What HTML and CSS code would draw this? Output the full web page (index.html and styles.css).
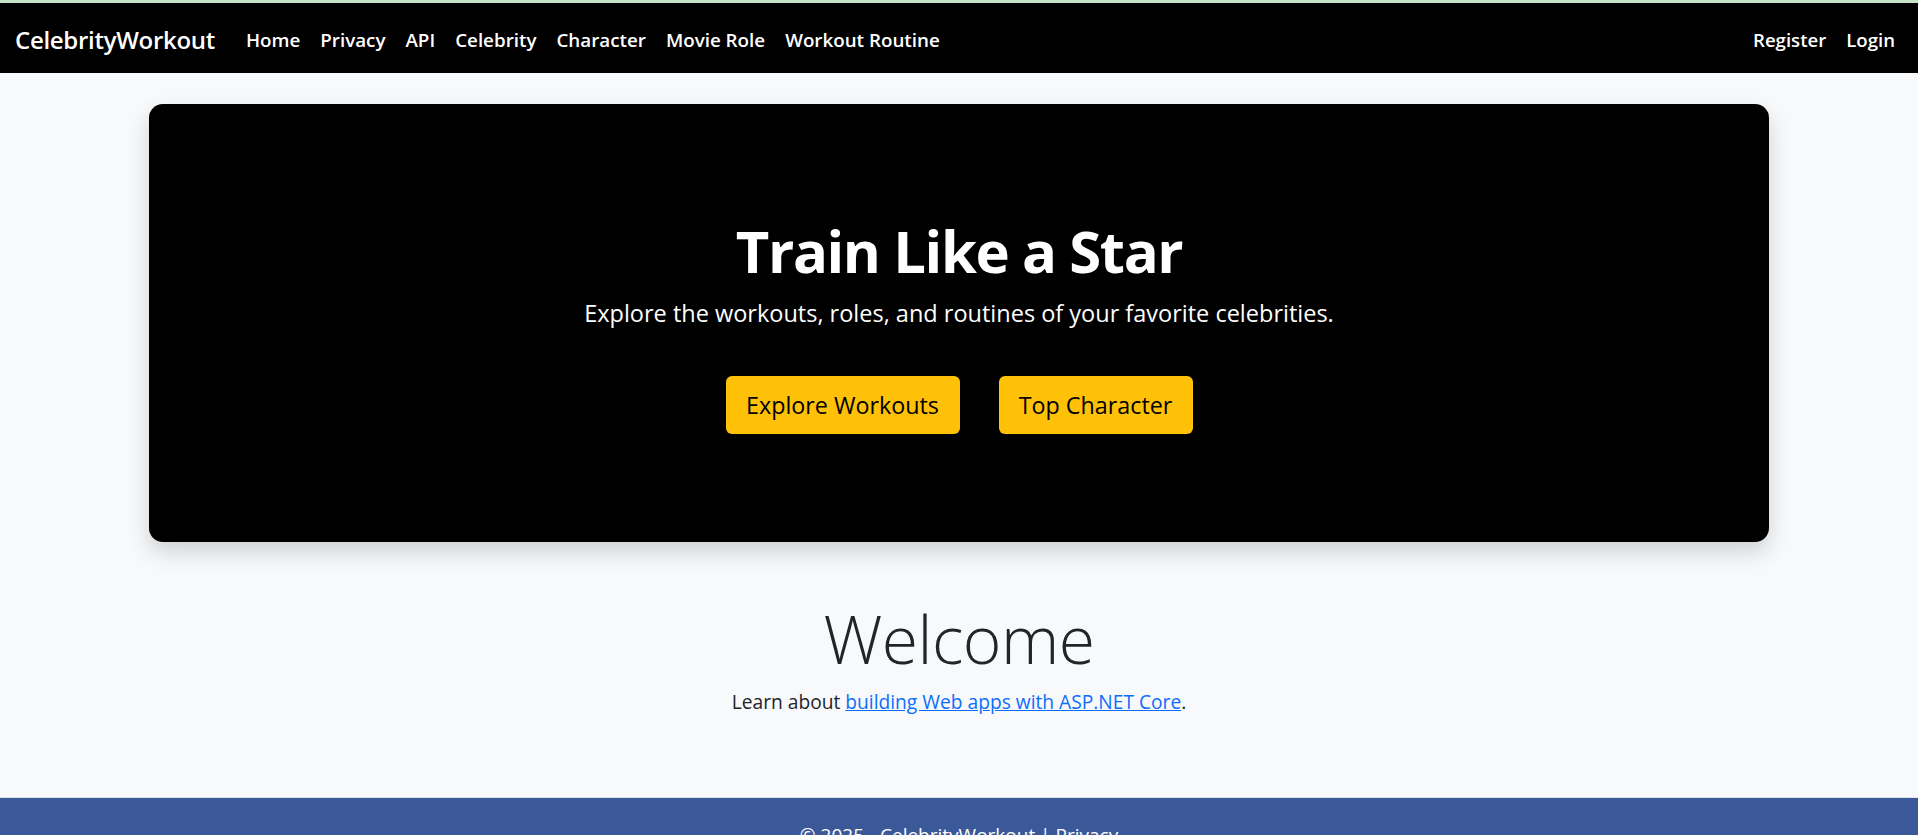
FILE: index.html
```html
<!DOCTYPE html>
<html lang="en">
<head>
<meta charset="utf-8">
<title>CelebrityWorkout</title>
<link rel="stylesheet" href="styles.css">
</head>
<body>
<div class="topline"></div>
<header class="navbar">
  <a class="brand" href="#">CelebrityWorkout</a>
  <nav class="nav-main">
    <a class="nav-link" href="#">Home</a>
    <a class="nav-link" href="#">Privacy</a>
    <a class="nav-link" href="#">API</a>
    <a class="nav-link" href="#">Celebrity</a>
    <a class="nav-link" href="#">Character</a>
    <a class="nav-link" href="#">Movie Role</a>
    <a class="nav-link" href="#">Workout Routine</a>
  </nav>
  <nav class="nav-auth">
    <a class="nav-link" href="#">Register</a>
    <a class="nav-link" href="#">Login</a>
  </nav>
</header>
<main class="container">
  <section class="hero">
    <h1 class="hero-title">Train Like a Star</h1>
    <p class="hero-lead">Explore the workouts, roles, and routines of your favorite celebrities.</p>
    <div class="hero-actions">
      <a class="btn" href="#">Explore Workouts</a>
      <a class="btn" href="#">Top Character</a>
    </div>
  </section>
  <section class="welcome">
    <h2 class="welcome-title">Welcome</h2>
    <p class="welcome-text">Learn about <a href="#">building Web apps with ASP.NET Core</a>.</p>
  </section>
</main>
<footer class="footer">
  <div class="footer-inner">&copy; 2025 - CelebrityWorkout | <a href="#">Privacy</a></div>
</footer>
</body>
</html>
```
FILE: styles.css
```css
* { box-sizing: border-box; }
html, body { margin: 0; padding: 0; }
body {
  background: #f8f9fa;
  color: #212529;
  font-family: "Open Sans", "Noto Sans", sans-serif;
  font-size: 19px;
  line-height: 1.5;
  height: 835px;
  overflow: hidden;
}
a { text-decoration: none; }

.topline { height: 3px; background: #c6e3c8; }

.navbar {
  height: 70px;
  background: #000;
  display: flex;
  align-items: center;
  padding: 4px 13px 0 15px;
}
.brand {
  color: #fff;
  font-size: 24px;
  font-weight: 600;
  margin-right: 21px;
  letter-spacing: -0.3px;
}
.nav-main, .nav-auth { display: flex; align-items: center; }
.nav-auth { margin-left: auto; }
.nav-link {
  color: #fff;
  font-size: 18.6px;
  font-weight: 600;
  padding: 0 10px;
}
.nav-main .nav-link { font-size: 18.8px; }

.container {
  width: 1620px;
  margin: 0 auto;
  padding-top: 31px;
}
.hero {
  background: #000;
  border-radius: 14px;
  box-shadow: 0 10px 22px rgba(0,0,0,0.16);
  height: 438px;
  padding-top: 112px;
  text-align: center;
  color: #fff;
}
.hero-title {
  margin: 0;
  font-size: 58px;
  font-weight: 700;
  line-height: 1.2;
  letter-spacing: -1.4px;
}
.hero-lead {
  margin: 10px 0 0;
  font-size: 23.5px;
  font-weight: 400;
  line-height: 1.5;
}
.hero-actions {
  margin-top: 45px;
  display: flex;
  justify-content: center;
  gap: 39px;
}
.btn {
  display: inline-block;
  background: #ffc107;
  color: #000;
  font-size: 23.3px;
  line-height: 36px;
  padding: 11px 0;
  border-radius: 6px;
  text-align: center;
}
.hero-actions .btn:first-child { width: 234px; }
.hero-actions .btn:last-child { width: 194px; }

.welcome { text-align: center; padding-top: 57px; height: 255px; }
.welcome-title {
  margin: 0;
  font-size: 66px;
  font-weight: 300;
  line-height: 1.2;
  letter-spacing: -0.5px;
}
.welcome-text { margin: 10px 0 0; font-size: 19.2px; }
.welcome-text a { color: #0d6efd; text-decoration: underline; }

.footer {
  border-top: 1px solid #dee2e6;
  background: #3b5998;
  height: 40px;
  overflow: hidden;
  text-align: center;
  color: #fff;
}
.footer-inner { line-height: 75px; font-size: 19px; }
.footer-inner a { color: #fff; }
```
